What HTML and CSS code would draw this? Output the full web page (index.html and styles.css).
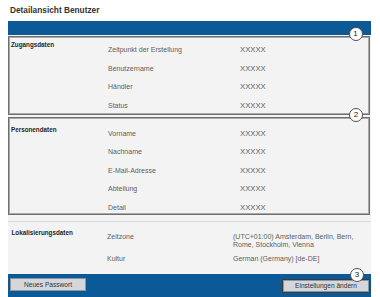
FILE: index.html
```html
<!DOCTYPE html>
<html lang="de">
<head>
    <meta charset="UTF-8">
    <meta name="viewport" content="width=device-width, initial-scale=1.0">
    <title>Detailansicht Benutzer</title>
    <link rel="stylesheet" href="styles.css">
</head>
<body>
    <div class="page">
        <h1 class="page-title">Detailansicht Benutzer</h1>
        <div class="topbar"></div>

        <div class="content">
            <section class="box box-access">
                <div class="box-title">Zugangsdaten</div>
                <div class="fields">
                    <div class="field"><span class="label">Zeitpunkt der Erstellung</span><span class="value">XXXXX</span></div>
                    <div class="field"><span class="label">Benutzername</span><span class="value">XXXXX</span></div>
                    <div class="field"><span class="label">Händler</span><span class="value">XXXXX</span></div>
                    <div class="field"><span class="label">Status</span><span class="value">XXXXX</span></div>
                </div>
            </section>

            <section class="box box-person">
                <div class="box-title">Personendaten</div>
                <div class="fields">
                    <div class="field"><span class="label">Vorname</span><span class="value">XXXXX</span></div>
                    <div class="field"><span class="label">Nachname</span><span class="value">XXXXX</span></div>
                    <div class="field"><span class="label">E-Mail-Adresse</span><span class="value">XXXXX</span></div>
                    <div class="field"><span class="label">Abteilung</span><span class="value">XXXXX</span></div>
                    <div class="field"><span class="label">Detail</span><span class="value">XXXXX</span></div>
                </div>
            </section>

            <section class="locale">
                <div class="box-title">Lokalisierungsdaten</div>
                <div class="locale-fields">
                    <div class="locale-field"><span class="label">Zeitzone</span><span class="locale-value">(UTC+01:00) Amsterdam, Berlin, Bern,<br>Rome, Stockholm, Vienna</span></div>
                    <div class="locale-field"><span class="label">Kultur</span><span class="locale-value">German (Germany) [de-DE]</span></div>
                </div>
            </section>
        </div>

        <div class="footer">
            <button class="btn">Neues Passwort</button>
            <button class="btn btn-active">Einstellungen ändern</button>
        </div>

        <!-- callout markers -->
        <span class="callout callout-1">1</span>
        <span class="callout callout-2">2</span>
        <span class="callout callout-3">3</span>
    </div>
</body>
</html>
```

FILE: styles.css
```css
* {
    box-sizing: border-box;
}

body {
    margin: 0;
    background-color: white;
    font-family: "Liberation Sans", Arial, sans-serif;
    color: #555;
}

.page {
    position: relative;
    width: 363px;
    margin-left: 8px;
}

.page-title {
    margin: 0;
    padding: 5px 0 0 2px;
    font-size: 8.3px;
    line-height: 10px;
    font-weight: bold;
    color: #333;
}

.topbar {
    height: 14px;
    margin-top: 6px;
    background-color: #0b5a97;
}

.content {
    padding-top: 1px;
    background-color: #f3f3f3;
}

.box {
    display: flex;
    align-items: flex-start;
    margin-right: 1px;
    border: 1px solid #6f6f6f;
    box-shadow: inset 0 0 0 1px #a9a9a9;
    background-color: #f3f3f3;
}

.box-title {
    width: 99px;
    padding-left: 2px;
    font-size: 6.3px;
    line-height: 8px;
    font-weight: bold;
    color: #262626;
}

.fields {
    display: flex;
    flex-direction: column;
}

.field {
    display: flex;
    line-height: 8px;
}

.label {
    width: 132px;
    font-size: 7px;
    color: #5e5e5e;
}

.value {
    font-size: 7.7px;
    color: #5e5e5e;
}

.box-access {
    padding-bottom: 4.5px;
}

.box-access .box-title {
    margin-top: 3.5px;
}

.box-access .fields {
    padding-top: 9px;
    gap: 10.5px;
}

.box-person {
    margin-top: 2px;
    padding-bottom: 2.4px;
}

.box-person .box-title {
    margin-top: 7.5px;
}

.box-person .fields {
    padding-top: 12px;
    gap: 10.4px;
}

.locale {
    display: flex;
    align-items: flex-start;
    margin-top: 6px;
    border-top: 1px solid #d6dde5;
    padding-bottom: 10.5px;
}

.locale .box-title {
    margin-top: 7px;
    padding-left: 3.5px;
}

.locale-fields {
    display: flex;
    flex-direction: column;
    gap: 6px;
    padding-top: 11.5px;
}

.locale-field {
    display: flex;
    line-height: 8px;
}

.locale-field .label {
    width: 126px;
}

.locale-value {
    font-size: 7px;
    color: #5e5e5e;
}

.footer {
    display: flex;
    justify-content: space-between;
    align-items: flex-start;
    height: 23px;
    padding: 4px 1px 0 2px;
    background-color: #0b5a97;
}

.btn {
    height: 13px;
    padding: 0;
    border: 1px solid #8d939a;
    background-color: #d3d7dc;
    font-family: "Liberation Sans", Arial, sans-serif;
    font-size: 6.6px;
    color: #333;
    cursor: pointer;
}

.btn:first-child {
    width: 76px;
}

.btn-active {
    width: 88px;
    height: 14px;
    margin-top: 1px;
    border-color: #3c3c3c;
    box-shadow: inset 0 0 0 1px #8f959c;
}

.callout {
    position: absolute;
    width: 14px;
    height: 14px;
    border: 1px solid #505050;
    border-radius: 50%;
    background-color: white;
    font-size: 8px;
    line-height: 12px;
    text-align: center;
    color: #222;
}

.callout-1 {
    left: 340.5px;
    top: 26.5px;
}

.callout-2 {
    left: 341px;
    top: 107.5px;
}

.callout-3 {
    left: 342px;
    top: 268px;
}
```
